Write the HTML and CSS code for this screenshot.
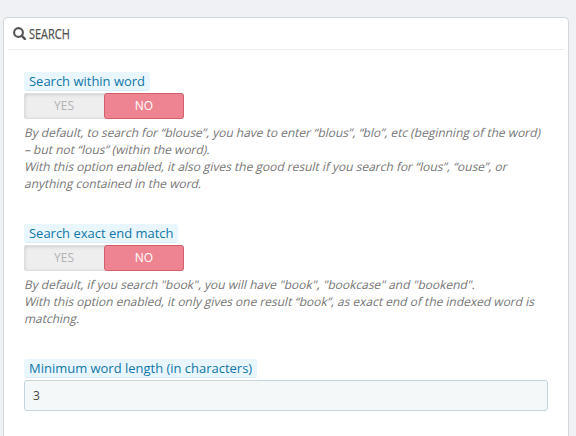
FILE: index.html
```html
<!DOCTYPE html>
<html lang="en">
<head>
<meta charset="utf-8">
<title>Search</title>
<link rel="stylesheet" href="styles.css">
</head>
<body>
<main class="panel">
  <h3 class="heading">
    <svg class="icon" viewBox="0 0 13 13" width="13" height="13" fill="none" stroke="#555"><circle cx="5.5" cy="5.5" r="4.4" stroke-width="2.1"/><path d="M8.8 8.8 11.8 11.8" stroke-width="2.5" stroke-linecap="round"/></svg>
    <span class="title">SEARCH</span>
  </h3>
  <section class="group">
    <label class="label">Search within word</label>
    <div class="switch"><span class="off">YES</span><span class="on">NO</span></div>
    <p class="help"><span class="line">By default, to search for “blouse”, you have to enter “blous”, “blo”, etc (beginning of the word)</span> <span class="line">– but not “lous” (within the word).</span> <span class="line">With this option enabled, it also gives the good result if you search for “lous”, “ouse”, or</span> <span class="line">anything contained in the word.</span></p>
  </section>
  <section class="group">
    <label class="label">Search exact end match</label>
    <div class="switch"><span class="off">YES</span><span class="on">NO</span></div>
    <p class="help"><span class="line">By default, if you search "book", you will have "book", "bookcase" and "bookend".</span> <span class="line">With this option enabled, it only gives one result “book”, as exact end of the indexed word is</span> <span class="line">matching.</span></p>
  </section>
  <section class="group">
    <label class="label" for="length">Minimum word length (in characters)</label>
    <input class="input" id="length" type="text" value="3">
  </section>
</main>
</body>
</html>
```
FILE: styles.css
```css
* { box-sizing: border-box; }
body {
  margin: 0;
  padding: 17px 7px 0 3px;
  height: 436px;
  overflow: hidden;
  background: #eff1f4;
  font-family: "Open Sans", sans-serif;
}
.panel {
  height: 419px;
  padding: 0 4px;
  background: #fff;
  border: 1px solid #d0d7dd;
  border-bottom: 0;
  border-radius: 5px 5px 0 0;
}
.heading {
  display: flex;
  align-items: center;
  gap: 2px;
  height: 32px;
  margin: 0 0 22px;
  padding: 0 5px;
  border-bottom: 1px solid #eaedef;
  color: #505050;
  font-size: 15px;
  font-weight: 500;
  line-height: 20px;
}
.icon { flex: none; }
.title {
  position: relative;
  top: -1px;
  left: .5px;
  transform: scaleX(.73);
  transform-origin: left;
  -webkit-text-stroke: .25px #505050;
}
.group {
  display: flex;
  flex-direction: column;
  align-items: flex-start;
  padding: 0 16px;
  margin-bottom: 32px;
}
.group:last-child { margin-bottom: 0; }
.label {
  height: 19px;
  padding: 0 5px;
  margin-bottom: 2px;
  background: #eaf6fd;
  border-bottom: 1px solid #d8eef8;
  border-radius: 3px;
  color: #0f78a8;
  font-size: 12.97px;
  line-height: 18px;
  white-space: nowrap;
}
.switch {
  display: flex;
  width: 160px;
  height: 26px;
  background: #eee;
  border-radius: 3px;
  box-shadow: inset 0 0 0 1px #dfdfdf, inset 0 1px 4px rgba(0,0,0,.2);
  font-size: 12px;
  line-height: 24px;
  text-align: center;
}
.off { width: 80px; padding-top: 1px; color: #b3b3b3; }
.on {
  width: 80px;
  background: #ee8492;
  border: 1px solid #d45f6d;
  border-radius: 3px;
  color: #fff;
}
.help {
  margin: 5px 0 0;
  color: #767676;
  font-size: 11.98px;
  line-height: 17px;
  white-space: nowrap;
}
.line {
  display: block;
  width: max-content;
  transform: skewX(-13deg);
  transform-origin: 0 13px;
}
.input {
  width: 524px;
  height: 31px;
  padding: 0 8px;
  background: #f4f8f9;
  border: 1px solid #c4d5dd;
  border-radius: 3px;
  color: #444;
  font: 12px "Open Sans", sans-serif;
}
```
